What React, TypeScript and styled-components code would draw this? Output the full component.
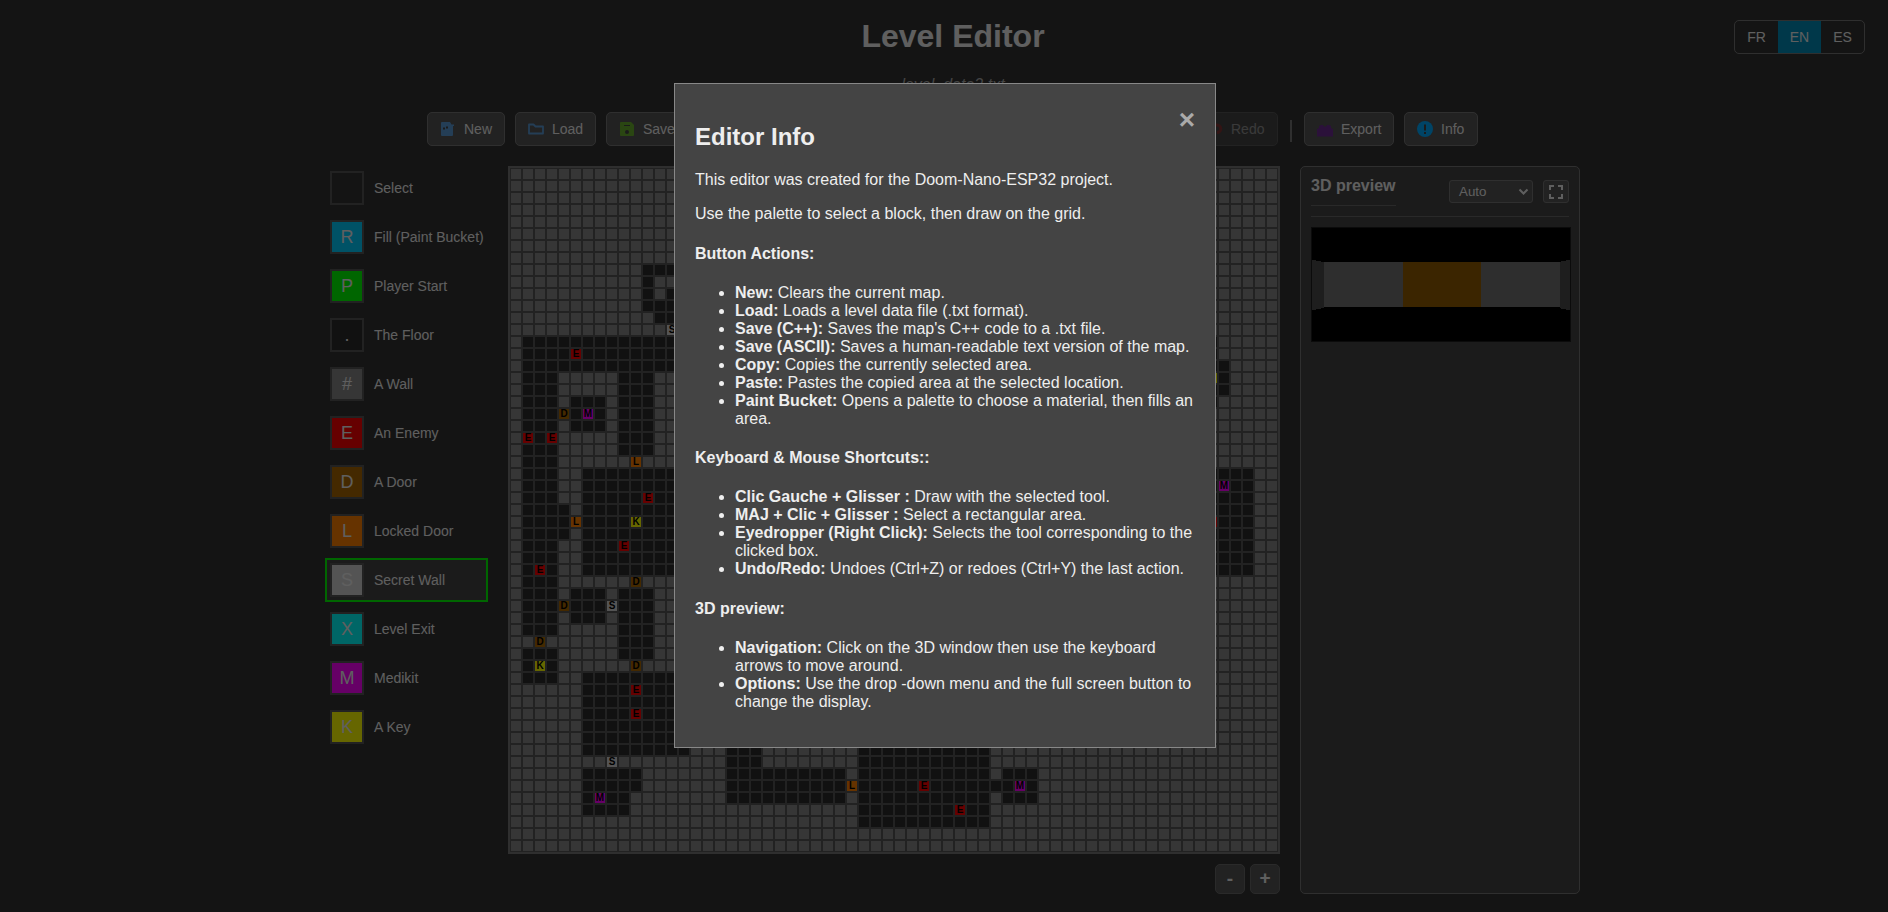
import React from "react";
import styled, { createGlobalStyle } from "styled-components";

const GlobalStyle = createGlobalStyle`
  body { margin: 0; background: #333; color: #eee; font-family: "Liberation Sans", Arial, sans-serif; overflow: hidden; }
  * { box-sizing: border-box; }
  button { font-family: inherit; }
`;

const Page = styled.div`
  position: relative;
  width: 1888px;
  height: 912px;
  overflow: hidden;
`;

const Header = styled.header`
  display: flex;
  flex-direction: column;
  align-items: center;
  padding: 18px 0 0 18px;
  height: 112px;
`;

const Title = styled.h1`
  margin: 0 0 21px;
  font-size: 32px;
  line-height: 37px;
`;

const FileName = styled.div`
  font-style: italic;
  font-size: 16px;
  line-height: 18px;
  color: #aaa;
`;

const LangSwitch = styled.div`
  position: absolute;
  top: 20px;
  right: 23px;
  display: flex;
  width: 131px;
  height: 34px;
  border: 1px solid #777;
  border-radius: 5px;
  overflow: hidden;
`;

const LangButton = styled.button<{ $active?: boolean }>`
  flex: 1;
  padding: 0;
  border: 0;
  font-size: 14px;
  color: #eee;
  background: ${(p) => (p.$active ? "#008cba" : "transparent")};
`;

const Toolbar = styled.div`
  display: flex;
  justify-content: space-between;
  width: 1051px;
  margin-left: 427px;
`;

const ToolGroup = styled.div`
  display: flex;
  align-items: center;
  gap: 10px;
`;

const ToolButton = styled.button<{ $w: number; $disabled?: boolean }>`
  display: flex;
  align-items: center;
  gap: 7px;
  width: ${(p) => p.$w}px;
  height: 34px;
  padding: 0 11px;
  border: 1px solid #777;
  border-radius: 5px;
  background: #555;
  color: #eee;
  font-size: 14px;
  white-space: nowrap;
  opacity: ${(p) => (p.$disabled ? 0.5 : 1)};
  svg { flex: none; }
`;

const Divider = styled.span`
  align-self: flex-end;
  width: 2px;
  height: 22px;
  margin: 0 2px 4px;
  background: #777;
`;

const Workspace = styled.main`
  display: flex;
  align-items: flex-start;
  gap: 20px;
  margin: 20px 0 0 325px;
`;

const Palette = styled.div`
  display: flex;
  flex-direction: column;
  gap: 5px;
  width: 163px;
`;

const PaletteItem = styled.div<{ $selected?: boolean }>`
  display: flex;
  align-items: center;
  gap: 10px;
  height: 44px;
  padding: 3px;
  border: 2px solid ${(p) => (p.$selected ? "#0f0" : "transparent")};
  background: ${(p) => (p.$selected ? "#444" : "transparent")};
  font-size: 14px;
  white-space: nowrap;
`;

const Swatch = styled.div<{ $bg: string }>`
  display: flex;
  flex: none;
  align-items: center;
  justify-content: center;
  width: 34px;
  height: 34px;
  border: 2px solid #555;
  background: ${(p) => p.$bg};
  color: #eee;
  font-size: 18px;
`;

const MapColumn = styled.div`
  display: flex;
  flex-direction: column;
  align-items: flex-end;
  gap: 10px;
`;

const Grid = styled.div`
  display: grid;
  grid-template-columns: repeat(64, 12px);
  grid-auto-rows: 12px;
  border: 2px solid #777;
`;

const Cell = styled.div<{ $bg: string }>`
  display: flex;
  align-items: center;
  justify-content: center;
  border: 1px solid #555;
  background: ${(p) => p.$bg};
  color: #000;
  font-size: 10px;
  line-height: 10px;
  font-weight: bold;
  overflow: hidden;
`;

const ZoomRow = styled.div`
  display: flex;
  gap: 5px;
`;

const ZoomButton = styled.button<{ $lift?: number }>`
  width: 30px;
  height: 30px;
  padding: 0 0 ${(p) => p.$lift ?? 0}px;
  border: 1px solid #6a6a6a;
  border-radius: 5px;
  background: #555;
  color: #eee;
  font-size: 19px;
  font-weight: bold;
`;

const Preview = styled.section`
  width: 280px;
  height: 728px;
  padding: 0 8px 0 10px;
  border: 1px solid #777;
  border-radius: 5px;
  background: #444;
`;

const PreviewHead = styled.div`
  display: flex;
  align-items: flex-start;
  width: 258px;
  height: 50px;
  padding-top: 9px;
  border-bottom: 1px solid #666;
`;

const PreviewTitle = styled.h3`
  width: 85px;
  height: 30px;
  margin: 0;
  border-bottom: 1px solid #666;
  font-size: 16px;
  line-height: 20px;
  white-space: nowrap;
`;

const ViewSelect = styled.div`
  display: flex;
  align-items: center;
  justify-content: space-between;
  width: 84px;
  height: 23px;
  margin: 4px 10px 0 53px;
  padding: 0 3px 0 9px;
  border: 1px solid #777;
  border-radius: 3px;
  background: #555;
  font-size: 13.333px;
`;

const FullButton = styled.button`
  display: flex;
  align-items: center;
  justify-content: center;
  width: 26px;
  height: 23px;
  margin-top: 4px;
  padding: 0;
  border: 1px solid #777;
  border-radius: 3px;
  background: #555;
`;

const Scene = styled.svg`
  display: block;
  margin-top: 10px;
`;

const Overlay = styled.div`
  position: absolute;
  inset: 0;
  padding: 83px 0 0 674px;
  background: rgba(0, 0, 0, 0.6);
`;

const Modal = styled.div`
  width: 542px;
  height: 665px;
  padding: 19.52px 20px 20px;
  border: 1px solid #888;
  background: #444;
  font-size: 16px;
`;

const Close = styled.span`
  float: right;
  color: #aaa;
  font-size: 28px;
  font-weight: bold;
`;

const WALL = "#888";
const FLOOR = "#2c2c2c";
const COLORS: Record<string, string> = {
  "#": WALL,
  ".": FLOOR,
  E: "#f00",
  D: "#a60",
  L: "#ff8000",
  S: "#d3d3d3",
  M: "#f0f",
  K: "#ff0",
};

/* Floor runs as [firstRow, lastRow, firstCol, lastCol] */
const FLOORS: number[][] = [
  [8, 8, 11, 20], [9, 10, 11, 11], [10, 10, 13, 20], [11, 11, 11, 20], [12, 12, 12, 20],
  [14, 16, 1, 20], [17, 38, 1, 3], [40, 42, 1, 3], [17, 23, 9, 11], [19, 21, 5, 7],
  [28, 30, 4, 4], [25, 33, 6, 20], [35, 40, 9, 11], [35, 37, 5, 7], [42, 48, 6, 14],
  [50, 51, 6, 10], [52, 53, 6, 9], [46, 49, 18, 20], [50, 52, 18, 27], [46, 54, 29, 39],
  [39, 39, 9, 11], [51, 51, 40, 40], [50, 52, 41, 43], [14, 19, 58, 58], [16, 18, 59, 59],
  [25, 33, 56, 61],
];

const MARKS: [number, number, string][] = [
  [13, 13, "S"], [15, 5, "E"], [20, 4, "D"], [20, 6, "M"], [22, 1, "E"], [22, 3, "E"],
  [24, 10, "L"], [27, 11, "E"], [29, 5, "L"], [29, 10, "K"], [31, 9, "E"], [33, 2, "E"],
  [34, 10, "D"], [36, 4, "D"], [36, 8, "S"], [39, 2, "D"], [41, 2, "K"], [41, 10, "D"],
  [43, 10, "E"], [45, 10, "E"], [49, 8, "S"], [52, 7, "M"], [51, 28, "L"], [51, 34, "E"],
  [53, 37, "E"], [51, 42, "M"], [26, 59, "M"], [17, 58, "K"], [29, 58, "E"],
];

const map: string[][] = Array.from({ length: 57 }, () => Array(64).fill("#"));
FLOORS.forEach(([r0, r1, c0, c1]) => {
  for (let r = r0; r <= r1; r++) for (let c = c0; c <= c1; c++) map[r][c] = ".";
});
MARKS.forEach(([r, c, k]) => { map[r][c] = k; });

const TOOLS: [string, string, string][] = [
  ["", "Select", "transparent"],
  ["R", "Fill (Paint Bucket)", "#00ccff"],
  ["P", "Player Start", "#0f0"],
  [".", "The Floor", FLOOR],
  ["#", "A Wall", WALL],
  ["E", "An Enemy", "#f00"],
  ["D", "A Door", "#a60"],
  ["L", "Locked Door", "#ff8000"],
  ["S", "Secret Wall", "#d3d3d3"],
  ["X", "Level Exit", "#0ff"],
  ["M", "Medikit", "#f0f"],
  ["K", "A Key", "#ff0"],
];

const NewIcon = () => (
  <svg width="18" height="18" viewBox="0 0 18 18">
    <path d="M3 2h8l1.500 2.500H15V6h-1v9a1 1 0 0 1-1 1H3a1 1 0 0 1-1-1V3a1 1 0 0 1 1-1z" fill="#5a9bd8" />
    <path d="M4 7.500h2v2H4zM7 6.500h2v2H7z" fill="#444" />
  </svg>
);
const LoadIcon = () => (
  <svg width="18" height="18" viewBox="0 0 18 18">
    <path d="M2 4.500h4.500l2 2H16v7H2z" fill="none" stroke="#5a9bd8" strokeWidth="1.800" strokeLinejoin="round" />
  </svg>
);
const SaveIcon = () => (
  <svg width="18" height="18" viewBox="0 0 18 18">
    <path d="M3 2h10l3 3v10a1 1 0 0 1-1 1H3a1 1 0 0 1-1-1V3a1 1 0 0 1 1-1z" fill="#6ab02e" />
    <path d="M6 5h6v1H6z" fill="#444" /><circle cx="9" cy="12" r="2" fill="#444" />
  </svg>
);
const RedoIcon = () => (
  <svg width="18" height="18" viewBox="0 0 18 18">
    <path d="M3 5h8a3 3 0 0 1 0 7.500M6 1.500L2.500 5 6 8.500" fill="none" stroke="#c33" strokeWidth="3" />
  </svg>
);
const ExportIcon = () => (
  <svg width="18" height="18" viewBox="0 0 18 18">
    <path d="M1 9l2-1V6l2-1h2l1 1.500h2L11 5h2l2 1v2l2 1v7.500H1z" fill="#6b2c91" />
  </svg>
);
const InfoIcon = () => (
  <svg width="18" height="18" viewBox="0 0 18 18">
    <circle cx="9" cy="9" r="8" fill="#0af" />
    <path d="M8 4.500h2v6H8zM8 12h2v2H8z" fill="#444" />
  </svg>
);

export default function App() {
  return (
    <Page>
      <GlobalStyle />
      <Header>
        <Title>Level Editor</Title>
        <FileName>level_data2.txt</FileName>
      </Header>
      <LangSwitch>
        <LangButton>FR</LangButton>
        <LangButton $active>EN</LangButton>
        <LangButton>ES</LangButton>
      </LangSwitch>
      <Toolbar>
        <ToolGroup>
          <ToolButton $w={78}><NewIcon />New</ToolButton>
          <ToolButton $w={81}><LoadIcon />Load</ToolButton>
          <ToolButton $w={120}><SaveIcon />Save (C++)</ToolButton>
        </ToolGroup>
        <ToolGroup>
          <ToolButton $w={84} $disabled><RedoIcon />Redo</ToolButton>
          <Divider />
          <ToolButton $w={90}><ExportIcon />Export</ToolButton>
          <ToolButton $w={74}><InfoIcon />Info</ToolButton>
        </ToolGroup>
      </Toolbar>
      <Workspace>
        <Palette>
          {TOOLS.map(([key, label, bg]) => (
            <PaletteItem key={label} $selected={key === "S"}>
              <Swatch $bg={bg}>{key}</Swatch>
              {label}
            </PaletteItem>
          ))}
        </Palette>
        <MapColumn>
          <Grid>
            {map.flatMap((row, r) =>
              row.map((k, c) => (
                <Cell key={`${r}-${c}`} $bg={COLORS[k]}>{k === "#" || k === "." ? null : k}</Cell>
              ))
            )}
          </Grid>
          <ZoomRow>
            <ZoomButton>-</ZoomButton>
            <ZoomButton $lift={3}>+</ZoomButton>
          </ZoomRow>
        </MapColumn>
        <Preview>
          <PreviewHead>
            <PreviewTitle>3D preview</PreviewTitle>
            <ViewSelect>
              Auto
              <svg width="11" height="8" viewBox="0 0 11 8">
                <path d="M1.500 1.500l4 4 4-4" fill="none" stroke="#eee" strokeWidth="2" />
              </svg>
            </ViewSelect>
            <FullButton>
              <svg width="14" height="14" viewBox="0 0 14 14">
                <path d="M1 5V1h4M9 1h4v4M13 9v4H9M5 13H1V9" fill="none" stroke="#eee" strokeWidth="2" />
              </svg>
            </FullButton>
          </PreviewHead>
          <Scene width="260" height="115" viewBox="0 0 260 115" shapeRendering="crispEdges">
            <rect width="260" height="115" fill="#1c1c1c" />
            <rect x="1" y="1" width="258" height="113" fill="#000" />
            <path d="M1 33h4v1h5v1h3v46h-3v1H5v1H1zM259 33h-4v1h-5v1h-1v46h1v1h5v1h4z" fill="#4c4c4c" />
            <path d="M13 35h79v45H13zM170 35h79v45h-79z" fill="#737373" />
            <path d="M92 35h78v45H92z" fill="#935d00" />
          </Scene>
        </Preview>
      </Workspace>
      <Overlay>
        <Modal>
          <Close>×</Close>
          <h2>Editor Info</h2>
          <p>This editor was created for the Doom-Nano-ESP32 project.</p>
          <p>Use the palette to select a block, then draw on the grid.</p>
          <h4>Button Actions:</h4>
          <ul>
            <li><strong>New:</strong> Clears the current map.</li>
            <li><strong>Load:</strong> Loads a level data file (.txt format).</li>
            <li><strong>Save (C++):</strong> Saves the map's C++ code to a .txt file.</li>
            <li><strong>Save (ASCII):</strong> Saves a human-readable text version of the map.</li>
            <li><strong>Copy:</strong> Copies the currently selected area.</li>
            <li><strong>Paste:</strong> Pastes the copied area at the selected location.</li>
            <li><strong>Paint Bucket:</strong> Opens a palette to choose a material, then fills an area.</li>
          </ul>
          <h4>Keyboard &amp; Mouse Shortcuts::</h4>
          <ul>
            <li><strong>Clic Gauche + Glisser :</strong> Draw with the selected tool.</li>
            <li><strong>MAJ + Clic + Glisser :</strong> Select a rectangular area.</li>
            <li><strong>Eyedropper (Right Click):</strong> Selects the tool corresponding to the clicked box.</li>
            <li><strong>Undo/Redo:</strong> Undoes (Ctrl+Z) or redoes (Ctrl+Y) the last action.</li>
          </ul>
          <h4>3D preview:</h4>
          <ul>
            <li><strong>Navigation:</strong> Click on the 3D window then use the keyboard arrows to move around.</li>
            <li><strong>Options:</strong> Use the drop -down menu and the full screen button to change the display.</li>
          </ul>
        </Modal>
      </Overlay>
    </Page>
  );
}
